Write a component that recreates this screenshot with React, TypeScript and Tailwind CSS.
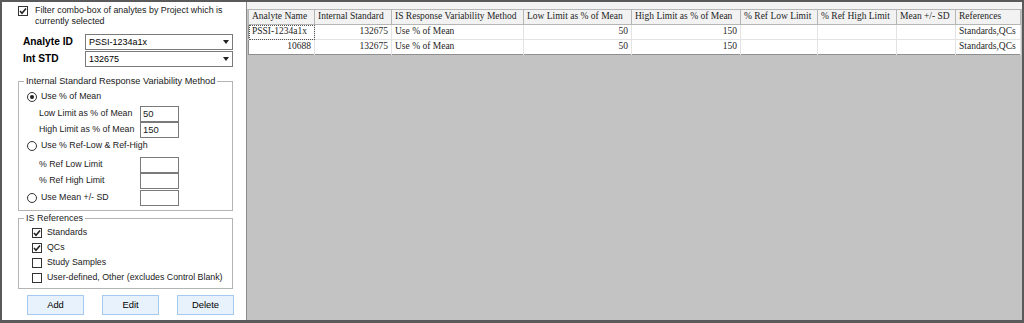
import React from "react";

const ui = { fontFamily: '"Liberation Sans", Arial, sans-serif' };
const grid = { fontFamily: '"Liberation Serif", "Times New Roman", serif' };

function Check({ checked }: { checked: boolean }) {
  return (
    <span className="flex h-[10px] w-[10px] shrink-0 items-center justify-center border border-[#333] bg-white">
      {checked && (
        <svg width="8" height="8" viewBox="0 0 8 8">
          <path d="M1 4 L3 6.2 L7 1.5" fill="none" stroke="#222" strokeWidth="1.6" />
        </svg>
      )}
    </span>
  );
}

function Radio({ on }: { on: boolean }) {
  return (
    <span className="flex h-[10px] w-[10px] shrink-0 items-center justify-center rounded-full border border-[#333] bg-white">
      {on && <span className="h-[4px] w-[4px] rounded-full bg-[#222]" />}
    </span>
  );
}

function Combo({ value }: { value: string }) {
  return (
    <div className="flex h-[16px] w-[148px] items-center border border-[#7a7a7a] bg-white">
      <span className="flex-1 pl-[3px] text-[9px] leading-none text-black">{value}</span>
      <span className="flex h-full w-[13px] items-center justify-center">
        <svg width="6" height="4" viewBox="0 0 6 4">
          <path d="M0 0 H6 L3 4 Z" fill="#222" />
        </svg>
      </span>
    </div>
  );
}

function Field({ value = "" }: { value?: string }) {
  return (
    <div className="flex h-[16px] w-[39px] items-center border border-[#7a7a7a] bg-white pl-[2px] text-[9.5px] leading-none">
      {value}
    </div>
  );
}

function LimitRow({ label, value, className = "" }: { label: string; value?: string; className?: string }) {
  return (
    <div className={`flex h-[16px] items-center ${className}`}>
      <span className="w-[121px] whitespace-nowrap pl-[20px]">{label}</span>
      <Field value={value} />
    </div>
  );
}

function RadioRow({ label, on }: { label: string; on: boolean }) {
  return (
    <div className="flex h-[16px] items-center gap-[4px] whitespace-nowrap pl-[8px]">
      <Radio on={on} />
      <span>{label}</span>
    </div>
  );
}

const columns = [
  { name: "Analyte Name", w: 66 },
  { name: "Internal Standard", w: 77 },
  { name: "IS Response Variability Method", w: 132 },
  { name: "Low Limit as % of Mean", w: 108 },
  { name: "High Limit as % of Mean", w: 109 },
  { name: "% Ref Low Limit", w: 77 },
  { name: "% Ref High Limit", w: 79 },
  { name: "Mean +/- SD", w: 59 },
  { name: "References", w: 65 },
];

const rows = [
  ["PSSI-1234a1x", "132675", "Use % of Mean", "50", "150", "", "", "", "Standards,QCs"],
  ["10688", "132675", "Use % of Mean", "50", "150", "", "", "", "Standards,QCs"],
];

const rightAligned = [1, 3, 4];

const refs: [string, boolean][] = [
  ["Standards", true],
  ["QCs", true],
  ["Study Samples", false],
  ["User-defined, Other (excludes Control Blank)", false],
];

export default function App() {
  return (
    <div
      className="flex h-[323px] w-[1024px] border-b-[3px] border-l-2 border-r-2 border-t-2 border-[#5a5a5a] bg-white"
      style={ui}
    >
      {/* Left panel */}
      <div className="flex w-[245px] shrink-0 flex-col border-r border-[#8a8a8a] text-[8.8px] text-[#1a1a1a]">
        <div className="flex gap-[7px] whitespace-nowrap pl-[16px] pt-[3px] text-[8.9px] leading-[11px]">
          <span className="mt-[1px]">
            <Check checked />
          </span>
          <span>
            Filter combo-box of analytes by Project which is
            <br />
            currently selected
          </span>
        </div>

        <div className="mt-[7px] flex flex-col gap-[1px] pl-[21px]">
          <div className="flex items-center">
            <span className="w-[62px] text-[10.2px] font-bold text-black">Analyte ID</span>
            <Combo value="PSSI-1234a1x" />
          </div>
          <div className="flex items-center">
            <span className="w-[62px] text-[10.2px] font-bold text-black">Int STD</span>
            <Combo value="132675" />
          </div>
        </div>

        {/* Variability method group */}
        <div className="relative ml-[16px] mt-[14px] h-[130px] w-[215px] border border-[#b4b4b4] pt-[7px]">
          <span className="absolute left-[5px] top-[-7px] whitespace-nowrap bg-white px-[2px] text-[9.2px] leading-[12px]">
            Internal Standard Response Variability Method
          </span>
          <RadioRow label="Use % of Mean" on />
          <LimitRow label="Low Limit as % of Mean" value="50" className="mt-[1px]" />
          <LimitRow label="High Limit as % of Mean" value="150" />
          <RadioRow label="Use % Ref-Low & Ref-High" on={false} />
          <LimitRow label="% Ref Low Limit" className="mt-[3px]" />
          <LimitRow label="% Ref High Limit" />
          <div className="mt-[1px] flex h-[16px] items-center">
            <div className="flex w-[121px] items-center gap-[4px] whitespace-nowrap pl-[8px]">
              <Radio on={false} />
              <span>Use Mean +/- SD</span>
            </div>
            <Field />
          </div>
        </div>

        {/* IS references group */}
        <div className="relative ml-[16px] mt-[7px] flex h-[71px] w-[215px] flex-col border border-[#b4b4b4] pl-[13px] pt-[6px]">
          <span className="absolute left-[5px] top-[-7px] whitespace-nowrap bg-white px-[2px] text-[9px] leading-[12px]">
            IS References
          </span>
          {refs.map(([label, on]) => (
            <div key={label} className="flex h-[15px] items-center gap-[5px] whitespace-nowrap">
              <Check checked={on} />
              <span>{label}</span>
            </div>
          ))}
        </div>

        <div className="ml-[25px] mt-[6px] flex gap-[18px]">
          {["Add", "Edit", "Delete"].map((b) => (
            <button
              key={b}
              className="flex h-[20px] w-[57px] items-center justify-center border border-[#a6c9ef] bg-[#e8f2fc] text-[9.4px] text-black"
            >
              {b}
            </button>
          ))}
        </div>
      </div>

      {/* Grid area */}
      <div className="flex flex-1 flex-col bg-[#c3c3c3]">
        <div className="h-[7px] bg-[#f3f3f3]" />
        <div className="pl-[1px]">
          <table
            className="table-fixed border-collapse border border-[#8f8f8f] text-[9.5px] text-[#1e1e1e]"
            style={{ ...grid, width: 772 }}
          >
            <colgroup>
              {columns.map((c) => (
                <col key={c.name} style={{ width: c.w }} />
              ))}
            </colgroup>
            <thead>
              <tr className="h-[15px] bg-[#f2f2f2]">
                {columns.map((c) => (
                  <th
                    key={c.name}
                    className="overflow-hidden whitespace-nowrap border border-[#b5b5b5] px-[3px] text-left font-normal leading-none"
                  >
                    {c.name}
                  </th>
                ))}
              </tr>
            </thead>
            <tbody>
              {rows.map((r, ri) => (
                <tr key={ri} className="h-[15px] bg-white">
                  {r.map((v, ci) => (
                    <td
                      key={ci}
                      className={`overflow-hidden whitespace-nowrap border-r border-t border-[#e3e3e3] px-[3px] leading-none ${
                        ri === 0 && ci === 0 ? "outline outline-1 -outline-offset-1 outline-dotted outline-[#555]" : ""
                      } ${rightAligned.includes(ci) || (ci === 0 && ri === 1) ? "text-right" : "text-left"}`}
                    >
                      {v}
                    </td>
                  ))}
                </tr>
              ))}
            </tbody>
          </table>
        </div>
      </div>
    </div>
  );
}
